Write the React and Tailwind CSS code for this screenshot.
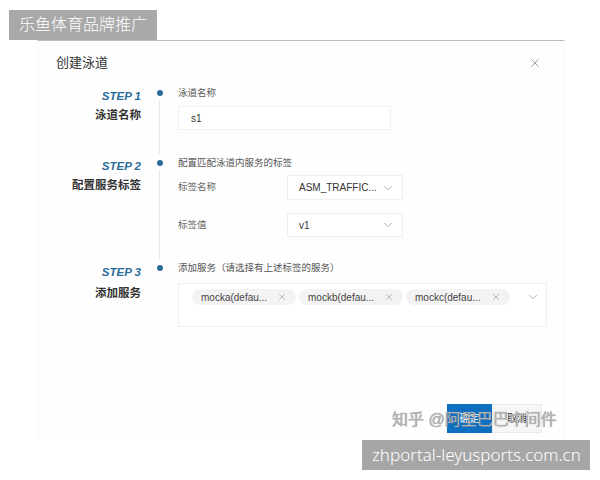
import React from 'react';
import { X, ChevronDown } from 'lucide-react';

const cjk = "font-['Liberation_Sans','Noto_Sans_CJK_SC',sans-serif]";

const steps = [
  { step: 'STEP 1', title: '泳道名称' },
  { step: 'STEP 2', title: '配置服务标签' },
  { step: 'STEP 3', title: '添加服务' },
];

const tags = ['mocka(defau...', 'mockb(defau...', 'mockc(defau...'];

const StepLeft = ({ step, title, pt, gap }) => (
  <div className={`w-[103px] shrink-0 flex flex-col items-end ${pt}`}>
    <div className="font-['Liberation_Sans',sans-serif] italic font-bold text-[11.5px] leading-[14px] text-[#2b6d9b]">{step}</div>
    <div className={`${gap} text-[11.5px] leading-[16px] font-semibold text-[#333]`}>{title}</div>
  </div>
);

const Rail = ({ last }) => (
  <div className="w-[37px] shrink-0 flex flex-col items-center pt-[3px]">
    <div className="w-[6px] h-[6px] rounded-full bg-[#2b6d9b]" />
    {!last && <div className="w-px flex-1 bg-[#e8e8e8] mt-[4px] mb-[3px]" />}
  </div>
);

const Select = ({ value, h }) => (
  <div className={`w-[116px] ${h} border border-[#efefef] bg-white flex items-center justify-between pl-[11px] pr-[7px]`}>
    <span className="text-[10px] text-[#333]">{value}</span>
    <ChevronDown size={14} strokeWidth={1.1} className="text-[#888]" />
  </div>
);

const App = () => {
  return (
    <div className={`w-[600px] h-[480px] bg-white relative overflow-hidden ${cjk}`}>
      <div className="absolute left-[9px] top-[10px] h-[30px] w-[148px] bg-[#a9a9a9] text-white text-[16px] font-light leading-[30px] pl-[10px]">
        乐鱼体育品牌推广
      </div>

      <div className="ml-[37px] mt-[40px] w-[528px] h-[400px] border-t border-t-[#bdbdbd] border-x border-x-[#f8f8f8] bg-[#fefefe]">
        <div className="flex items-center justify-between pt-[13px] pl-[18px] pr-[22px]">
          <span className="text-[13px] leading-[18px] text-[#333]">创建泳道</span>
          <X size={14} strokeWidth={1.2} className="text-[#777]" />
        </div>

        <div className="mt-[15px]">
          {/* step 1 */}
          <div className="flex h-[70px]">
            <StepLeft {...steps[0]} pt="pt-[2px]" gap="mt-[4px]" />
            <Rail />
            <div className="flex-1">
              <div className="text-[9.5px] leading-[12px] text-[#555]">泳道名称</div>
              <div className="mt-[7px] w-[213px] h-[24px] border border-[#f0f0f0] bg-white flex items-center pl-[12px] text-[10px] text-[#333]">
                s1
              </div>
            </div>
          </div>

          {/* step 2 */}
          <div className="flex h-[105px]">
            <StepLeft {...steps[1]} pt="pt-[2px]" gap="mt-[4px]" />
            <Rail />
            <div className="flex-1">
              <div className="text-[9.5px] leading-[12px] text-[#555]">配置匹配泳道内服务的标签</div>
              <div className="mt-[6px] flex items-center">
                <span className="w-[109px] text-[9.5px] text-[#666]">标签名称</span>
                <Select value="ASM_TRAFFIC..." h="h-[25px]" />
              </div>
              <div className="mt-[13px] flex items-center">
                <span className="w-[109px] text-[9.5px] text-[#666]">标签值</span>
                <Select value="v1" h="h-[24px]" />
              </div>
            </div>
          </div>

          {/* step 3 */}
          <div className="flex">
            <StepLeft {...steps[2]} pt="pt-[3px]" gap="mt-[6px]" />
            <Rail last />
            <div className="flex-1">
              <div className="text-[9.5px] leading-[12px] text-[#555]">添加服务（请选择有上述标签的服务）</div>
              <div className="mt-[9px] w-[369px] h-[44px] border border-[#f0f0f0] bg-white flex items-start pt-[5px] pl-[13px] pr-[6px]">
                <div className="flex gap-[3px]">
                  {tags.map(t => (
                    <div key={t} className="h-[16px] w-[104px] rounded-full bg-[#f3f3f3] flex items-center justify-between pl-[9px] pr-[9px]">
                      <span className="text-[10px] text-[#444]">{t}</span>
                      <X size={10} strokeWidth={1.3} className="text-[#888]" />
                    </div>
                  ))}
                </div>
                <ChevronDown size={14} strokeWidth={1.1} className="text-[#888] ml-auto mt-[1px]" />
              </div>
            </div>
          </div>
        </div>

        <div className="flex justify-end pr-[22px] mt-[77px]">
          <div className="w-[45px] h-[29px] bg-[#0e6fc1] text-white text-[10px] flex items-center justify-center">确定</div>
          <div className="w-[50px] h-[29px] bg-[#f6f6f6] border border-[#ebebeb] text-[#333] text-[10px] flex items-center justify-center">取消</div>
        </div>
      </div>

      <div className="absolute left-[392px] top-[410px] text-[16px] leading-[20px] text-[#b3b3b3] [text-shadow:0_0_1px_#888]">
        知乎 @阿里巴巴中间件
      </div>

      <div className="absolute left-[362px] top-[440px] w-[228px] h-[30px] bg-[#a6a6a6] text-white text-[17px] font-light leading-[30px] pl-[10px] font-['Noto_Sans',sans-serif]">
        zhportal-leyusports.com.cn
      </div>
    </div>
  );
};

export default App;
